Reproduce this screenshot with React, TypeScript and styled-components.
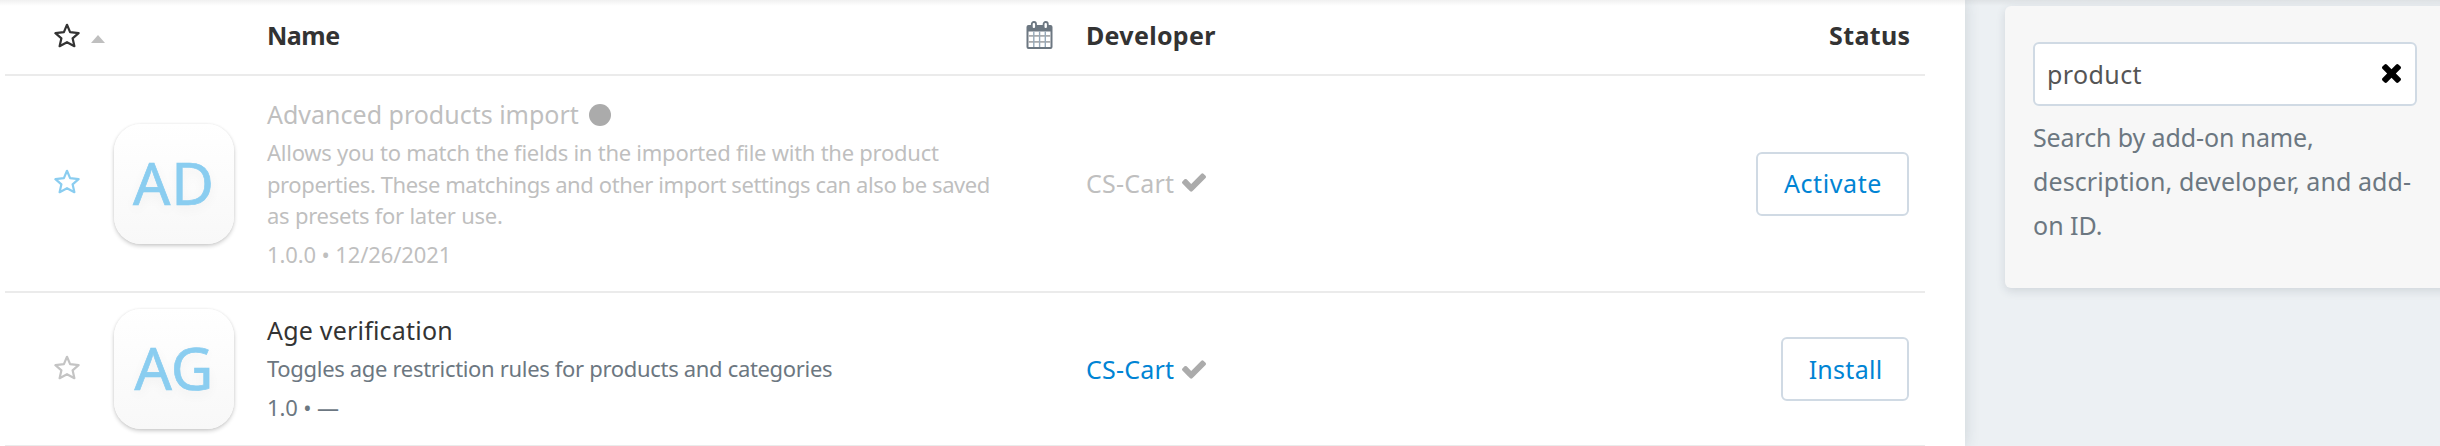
import React from 'react';
import styled, { createGlobalStyle } from 'styled-components';

const GlobalStyle = createGlobalStyle`
  * { box-sizing: border-box; }
  body {
    margin: 0;
    overflow: hidden;
    background: #ecf0f3;
    color: #333;
    font: 400 25px/36px "Noto Sans", "Open Sans", sans-serif;
  }
`;

const Page = styled.div`
  position: relative;
  display: flex;
  height: 446px;
  overflow: hidden;
`;

const TopShade = styled.div`
  position: absolute;
  inset: 0 0 auto;
  height: 6px;
  background: linear-gradient(rgba(0, 0, 0, 0.06), rgba(0, 0, 0, 0));
`;

const Main = styled.main`
  flex: none;
  width: 1965px;
  padding: 0 40px 0 5px;
  background: #fff;
  box-shadow: 0 0 14px rgba(40, 60, 80, 0.16);
`;

const Row = styled.div<{ $height: number }>`
  display: grid;
  grid-template-columns: 109px 153px 759px 60px 400px 1fr;
  align-items: center;
  height: ${(p) => p.$height}px;
  padding-right: 16px;
  border-bottom: 2px solid #ebebeb;
`;

const HeadRow = styled(Row)`
  padding-bottom: 4px;
`;

const Text = styled.span<{ $spacing?: number }>`
  letter-spacing: ${(p) => p.$spacing ?? 0}px;
  white-space: nowrap;
`;

const Heading = styled(Text)`
  font-weight: 700;
`;

const FavoriteCell = styled.div`
  display: flex;
  align-items: center;
  gap: 11px;
  padding-left: 49px;
`;

const AddonFavoriteCell = styled(FavoriteCell)`
  padding-bottom: 4px;
`;

const Caret = styled.span`
  margin-top: 7px;
  border: 7.5px solid transparent;
  border-top: 0;
  border-bottom: 8px solid #bfbfbf;
`;

const AddonIcon = styled.div<{ $spacing: number }>`
  display: flex;
  align-items: center;
  justify-content: center;
  width: 120px;
  height: 120px;
  border-radius: 27px;
  background: linear-gradient(#fff, #f8f8f8);
  box-shadow: 0 2px 4px rgba(0, 0, 0, 0.2), 0 0 3px rgba(0, 0, 0, 0.06);
  color: #8acdf0;
  font-size: 58.5px;
  letter-spacing: ${(p) => p.$spacing}px;
  line-height: 116px;
  padding-bottom: 4px;
  -webkit-text-stroke: 0.7px #8acdf0;
  text-shadow: 0 4px 12px rgba(0, 0, 0, 0.05);
`;

const Info = styled.div<{ $muted?: boolean }>`
  align-self: start;
  padding-top: ${(p) => (p.$muted ? 20 : 19)}px;
  color: ${(p) => (p.$muted ? '#bfbfbf' : '#6c7781')};
`;

const Title = styled.div<{ $muted?: boolean }>`
  display: flex;
  align-items: center;
  gap: 10px;
  height: 36px;
  color: ${(p) => (p.$muted ? '#bfbfbf' : '#333')};
`;

const Dot = styled.span`
  width: 22px;
  height: 22px;
  margin-top: 1px;
  border-radius: 50%;
  background: #ababab;
`;

const Description = styled.div`
  display: flex;
  flex-direction: column;
  margin-top: 5px;
  font-size: 22px;
  line-height: 31.5px;
`;

const Meta = styled.div`
  margin-top: 6px;
  font-size: 22px;
  line-height: 32px;
`;

const Developer = styled.div<{ $muted?: boolean }>`
  display: flex;
  align-items: center;
  gap: 8px;
  grid-column: 5;
  padding-bottom: ${(p) => (p.$muted ? 2 : 0)}px;
  color: ${(p) => (p.$muted ? '#bfbfbf' : '#0084d4')};
`;

const Status = styled.div`
  display: flex;
  justify-content: flex-end;
`;

const StatusHeading = styled(Heading)`
  margin-right: -1.5px;
`;

const ActionButton = styled.button<{ $width: number }>`
  width: ${(p) => p.$width}px;
  height: 64px;
  padding: 0 0 1px 1px;
  border: 2px solid #d0dae4;
  border-radius: 6px;
  background: #fff;
  color: #0084d4;
  font: inherit;
`;

const Sidebar = styled.aside`
  flex: none;
  padding: 6px 0 0 40px;
`;

const SearchPanel = styled.section`
  width: 475px;
  height: 282px;
  padding: 36px 28px;
  border-radius: 6px;
  background: #f7f7f7;
  box-shadow: 0 3px 10px rgba(40, 60, 80, 0.14);
`;

const SearchBox = styled.div`
  display: flex;
  align-items: center;
  justify-content: space-between;
  width: 384px;
  height: 64px;
  padding: 0 14px 1px 12px;
  border: 2px solid #d0dae4;
  border-radius: 6px;
  background: #fff;
  color: #555;
`;

const Help = styled.div`
  display: flex;
  flex-direction: column;
  margin-top: 9px;
  color: #6c7781;
  line-height: 44px;
`;

const StarIcon = ({ color }: { color: string }) => (
  <svg width="26" height="25" viewBox="0 0 26 25" fill="none" stroke={color} strokeWidth="2.2" strokeLinejoin="round">
    <path d="M13 1.8 16.1 9.1 24.6 10.2 18.6 15.3 20.4 23.2 13 19.2 5.6 23.2 7.4 15.3 1.4 10.2 9.9 9.1Z" />
  </svg>
);

const CalendarIcon = () => (
  <svg width="27" height="28" viewBox="0 0 27 28">
    <path d="M2.5 4H24.500a2 2 0 0 1 2 2V26a2 2 0 0 1-2 2H2.500a2 2 0 0 1-2-2V6a2 2 0 0 1 2-2Z" fill="#6c7781" />
    <path d="M2.500 10.500H24.500V26H2.500Z" fill="#fff" />
    <path d="M2.500 14.900H24.500M2.500 20.800H24.500" stroke="#a9abad" strokeWidth="1.800" />
    <path d="M7.800 10.500V26M13.600 10.500V26M19.300 10.500V26" stroke="#96a9ba" strokeWidth="1.400" />
    <rect x="5.800" y="1" width="4.200" height="7" rx="2" fill="#fff" stroke="#6c7781" strokeWidth="1.800" />
    <rect x="17.600" y="1" width="4.200" height="7" rx="2" fill="#fff" stroke="#6c7781" strokeWidth="1.800" />
  </svg>
);

const CheckIcon = () => (
  <svg width="24" height="19" viewBox="121 334 1550 1188" fill="#ababab">
    <path d="M1671 566q0 40-28 68l-724 724-136 136q-28 28-68 28t-68-28l-136-136-362-362q-28-28-28-68t28-68l136-136q28-28 68-28t68 28l294 295 656-657q28-28 68-28t68 28l136 136q28 28 28 68z" />
  </svg>
);

const ClearIcon = () => (
  <svg width="19" height="19" viewBox="302 366 1188 1188" fill="#000">
    <path d="M1490 1322q0 40-28 68l-136 136q-28 28-68 28t-68-28l-294-294-294 294q-28 28-68 28t-68-28l-136-136q-28-28-28-68t28-68l294-294-294-294q-28-28-28-68t28-68l136-136q28-28 68-28t68 28l294 294 294-294q28-28 68-28t68 28l136 136q28 28 28 68t-28 68l-294 294 294 294q28 28 28 68z" />
  </svg>
);

type Line = { text: string; spacing: number };

type Addon = {
  initials: Line;
  title: Line;
  description: Line[];
  meta: Line;
  action: Line;
  buttonWidth: number;
  height: number;
  star: string;
  muted?: boolean;
};

const addons: Addon[] = [
  {
    initials: { text: 'AD', spacing: 1 },
    title: { text: 'Advanced products import', spacing: 0 },
    description: [
      { text: 'Allows you to match the fields in the imported file with the product', spacing: -0.249 },
      { text: 'properties. These matchings and other import settings can also be saved', spacing: -0.41 },
      { text: 'as presets for later use.', spacing: -0.239 },
    ],
    meta: { text: '1.0.0 • 12/26/2021', spacing: -0.12 },
    action: { text: 'Activate', spacing: 0.6 },
    buttonWidth: 153,
    height: 217,
    star: '#8acdf0',
    muted: true,
  },
  {
    initials: { text: 'AG', spacing: 0 },
    title: { text: 'Age verification', spacing: 0.2 },
    description: [{ text: 'Toggles age restriction rules for products and categories', spacing: -0.322 }],
    meta: { text: '1.0 • —', spacing: -0.13 },
    action: { text: 'Install', spacing: 0.27 },
    buttonWidth: 128,
    height: 154,
    star: '#c4c4c4',
  },
];

const AddonRow = ({ addon }: { addon: Addon }) => (
  <Row $height={addon.height}>
    <AddonFavoriteCell>
      <StarIcon color={addon.star} />
    </AddonFavoriteCell>
    <AddonIcon $spacing={addon.initials.spacing}>{addon.initials.text}</AddonIcon>
    <Info $muted={addon.muted}>
      <Title $muted={addon.muted}>
        <Text $spacing={addon.title.spacing}>{addon.title.text}</Text>
        {addon.muted && <Dot />}
      </Title>
      <Description>
        {addon.description.map((line) => (
          <Text key={line.text} $spacing={line.spacing}>{line.text}</Text>
        ))}
      </Description>
      <Meta>
        <Text $spacing={addon.meta.spacing}>{addon.meta.text}</Text>
      </Meta>
    </Info>
    <Developer $muted={addon.muted}>
      <Text $spacing={0.21}>CS-Cart</Text>
      <CheckIcon />
    </Developer>
    <Status>
      <ActionButton $width={addon.buttonWidth}>
        <Text $spacing={addon.action.spacing}>{addon.action.text}</Text>
      </ActionButton>
    </Status>
  </Row>
);

export default function App() {
  return (
    <Page>
      <GlobalStyle />
      <Main>
        <HeadRow $height={76}>
          <FavoriteCell>
            <StarIcon color="#333" />
            <Caret />
          </FavoriteCell>
          <span />
          <Heading $spacing={-0.5}>Name</Heading>
          <CalendarIcon />
          <Heading $spacing={0.3}>Developer</Heading>
          <Status>
            <StatusHeading $spacing={0.36}>Status</StatusHeading>
          </Status>
        </HeadRow>
        {addons.map((addon) => (
          <AddonRow key={addon.title.text} addon={addon} />
        ))}
      </Main>
      <Sidebar>
        <SearchPanel>
          <SearchBox>
            <Text $spacing={0.4}>product</Text>
            <ClearIcon />
          </SearchBox>
          <Help>
            <Text $spacing={-0.12}>Search by add-on name,</Text>
            <Text $spacing={0.086}>description, developer, and add-</Text>
            <Text>on ID.</Text>
          </Help>
        </SearchPanel>
      </Sidebar>
      <TopShade />
    </Page>
  );
}
